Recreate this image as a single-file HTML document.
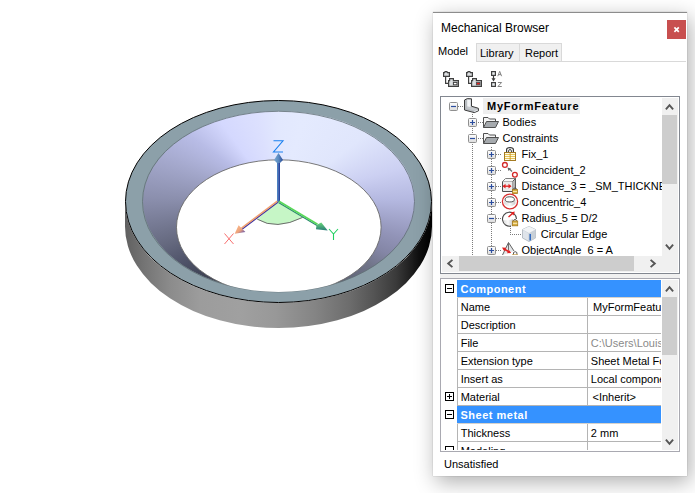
<!DOCTYPE html>
<html><head><meta charset="utf-8">
<style>
html,body{margin:0;padding:0;}
body{width:695px;height:493px;overflow:hidden;background:#fff;position:relative;font-family:"Liberation Sans",sans-serif;font-size:12px;color:#000;}
.a{position:absolute;}
.t{position:absolute;white-space:pre;line-height:16px;font-size:12px;}
#panel{position:absolute;left:433px;top:12px;width:254px;height:464px;background:#fff;box-shadow:0 0 1px rgba(0,0,0,0.3),3px 6px 20px rgba(0,0,0,0.32);}
#ptop{position:absolute;left:433px;top:12px;width:254px;height:1px;background:#8c8c8c;}
</style></head><body>
<!-- MODEL -->
<svg class="a" style="left:0;top:0" width="433" height="493" viewBox="0 0 433 493">
<defs>
<linearGradient id="gw" x1="125" y1="0" x2="432" y2="0" gradientUnits="userSpaceOnUse">
<stop offset="0" stop-color="#606060"/><stop offset="0.062" stop-color="#747474"/><stop offset="0.15" stop-color="#8c8c8c"/><stop offset="0.244" stop-color="#9c9c9c"/><stop offset="0.375" stop-color="#a0a0a0"/><stop offset="0.49" stop-color="#989898"/><stop offset="0.62" stop-color="#848484"/><stop offset="0.733" stop-color="#6c6c6c"/><stop offset="0.81" stop-color="#545454"/><stop offset="0.883" stop-color="#3a3a3a"/><stop offset="0.96" stop-color="#0e0e0e"/><stop offset="1" stop-color="#000"/>
</linearGradient>
</defs>
<path d="M125,201.5 A153.5,101.5 0 0 0 432,201.5 L432,226.5 A153.5,101.5 0 0 1 125,226.5 Z" fill="url(#gw)"/>
<ellipse cx="278.5" cy="201.5" rx="153" ry="101" fill="#8ca0a9" stroke="#000" stroke-width="1"/>
</svg>
<div class="a" style="left:142.5px;top:111.3px;width:272px;height:272px;border-radius:50%;transform-origin:0 0;transform:scaleY(0.664);background:conic-gradient(from 0deg at 50% 50%,#e2e8fe 0deg,#e4eafe 11deg,#e0e6fc 41deg,#ccd0f2 68deg,#b4b8e0 89deg,#9294b8 114deg,#8486a6 126deg,#707488 137deg,#404458 180deg,#404456 214deg,#50546a 227deg,#666a80 241deg,#8a8eac 271deg,#a4a8cc 298deg,#b8bce6 318deg,#d4d8fe 334deg,#dce0fe 350deg,#e2e8fe 360deg)"></div>
<svg class="a" style="left:0;top:0" width="433" height="493" viewBox="0 0 433 493">
<defs><clipPath id="ci"><ellipse cx="278.5" cy="201.6" rx="136" ry="90.3"/></clipPath></defs>
<ellipse cx="278.5" cy="201.6" rx="136" ry="90.3" fill="none" stroke="#5f6f74" stroke-width="0.8"/>
<g clip-path="url(#ci)"><ellipse cx="278.8" cy="227.2" rx="102.3" ry="67.4" fill="#fff" stroke="#6a6a6a" stroke-width="0.9"/></g>
<!-- sector -->
<path d="M278,201.5 L257.3,219.2 Q276,230.6 302.7,217.4 Z" fill="#c6f6c6"/>
<path d="M257.3,219.2 Q276,230.6 302.7,217.4" fill="none" stroke="#6c6c6c" stroke-width="1"/>
<defs>
<linearGradient id="gzh" x1="0" y1="0" x2="1" y2="0"><stop offset="0" stop-color="#7aa8d0"/><stop offset="0.5" stop-color="#5a8ac0"/><stop offset="1" stop-color="#2a4a98"/></linearGradient>
<linearGradient id="gxh" x1="0" y1="0" x2="1" y2="1"><stop offset="0" stop-color="#fcc090"/><stop offset="0.55" stop-color="#eea27a"/><stop offset="0.8" stop-color="#8a6aa0"/><stop offset="1" stop-color="#4a3a9a"/></linearGradient>
<linearGradient id="gyh" x1="0" y1="0" x2="0" y2="1"><stop offset="0" stop-color="#68d878"/><stop offset="1" stop-color="#2a7a78"/></linearGradient>
</defs>
<!-- Z -->
<rect x="277" y="161" width="1.2" height="41" fill="#4a80c0"/>
<rect x="278.2" y="161" width="1.8" height="41" fill="#2848a0"/>
<path d="M278.5,153 L283,160 L280,163 L277,163 L274,160 Z" fill="url(#gzh)"/>
<path d="M273.5,140.8 L283,140.8 L273.5,152 L283,152" fill="none" stroke="#1a80f0" stroke-width="1.1"/>
<!-- X -->
<line x1="277.8" y1="202.2" x2="242" y2="229.2" stroke="#3a30a0" stroke-width="1.3"/>
<line x1="277.3" y1="201.2" x2="241.5" y2="228.2" stroke="#f0a070" stroke-width="1.5"/>
<path d="M234.7,233.8 L238.6,225.3 L245.4,232 Z" fill="url(#gxh)"/>
<path d="M224.5,233.5 L233.5,244 M233.5,233.5 L224.5,244" stroke="#f87070" stroke-width="1"/>
<!-- Y -->
<line x1="278.5" y1="202.5" x2="317" y2="225.5" stroke="#2a8a70" stroke-width="1.3"/>
<line x1="279" y1="201.3" x2="317.5" y2="224.3" stroke="#58d858" stroke-width="1.6"/>
<path d="M327.7,230.6 L316,229.2 L316.5,225 L321.3,222.4 Z" fill="url(#gyh)"/>
<path d="M329,229 L333.5,234 L338,229 M333.5,234 L333.5,240" fill="none" stroke="#20d060" stroke-width="1.1"/>
</svg>

<div id="panel"></div>
<div id="ptop"></div>
<div class="t" style="left:441px;top:20px;color:#000">Mechanical Browser</div>
<svg class="a" style="left:667px;top:20px" width="19" height="19"><rect x="0" y="0" width="19" height="19" fill="#c84f4f"/><path d="M7.4 7.4L11.8 11.8M11.8 7.4L7.4 11.8" stroke="#fff" stroke-width="1.7"/></svg>

<!-- tabs -->
<div class="t" style="left:438px;top:43px;color:#000;font-size:11px">Model</div>
<div class="a" style="left:476px;top:43px;width:86px;height:18px;background:#f0f0f0;border:1px solid #d9d9d9;border-bottom:none;box-sizing:border-box"></div>
<div class="a" style="left:519px;top:43px;width:1px;height:18px;background:#d9d9d9"></div>
<div class="a" style="left:476px;top:61px;width:210px;height:1px;background:#d9d9d9"></div>
<div class="t" style="left:480px;top:45px;color:#000;font-size:11px">Library</div>
<div class="t" style="left:525px;top:45px;color:#000;font-size:11px">Report</div>

<!-- toolbar -->
<svg class="a" style="left:0;top:0" width="695" height="100">
<g id="tbi" stroke="#404040" stroke-width="1.2" fill="#dcdfe1" stroke-linejoin="miter">
<path d="M443.6,76.4 V72.6 H444.6 L445.1,71.6 H446.9 L447.4,72.6 H449.4 V76.4 Z"/>
<path d="M445.6,76.6 V83.4 H448.6" fill="none"/>
<path d="M448.6,86.4 V80.6 H449.6 V78.6 H453.4 V80.6 H458.4 V86.4 Z"/>
</g>
<rect x="453.4" y="82.4" width="3.6" height="2.4" fill="#fff" stroke="#404040" stroke-width="1"/>
<use href="#tbi" x="23"/>
<rect x="476.4" y="82.4" width="3.6" height="2.4" fill="#e81818" stroke="#505050" stroke-width="0.9"/>
<rect x="491.6" y="71.6" width="3.8" height="3.8" fill="#e8ecee" stroke="#404040" stroke-width="1.2"/>
<rect x="491.6" y="82.6" width="3.8" height="3.8" fill="#e8ecee" stroke="#404040" stroke-width="1.2"/>
<path d="M493.5,76 V79" stroke="#404040" stroke-width="1.2"/>
<path d="M491.5,78.2 H495.5 L493.5,81.6 Z" fill="#404040"/>
<path d="M497.8,76.2 L499.7,71.3 L501.6,76.2 M498.5,74.6 H500.9" fill="none" stroke="#777" stroke-width="0.9"/>
<path d="M497.9,82.5 H501.6 L497.9,86.5 H501.8" fill="none" stroke="#777" stroke-width="0.9"/>
</svg>
<!-- tree -->
<div class="a" style="left:440px;top:96px;width:240px;height:178px;border:1px solid #828790;box-sizing:border-box;background:#fff"></div>
<div class="a" style="left:440px;top:274px;width:240px;height:4px;background:#f0f0f0"></div>
<!-- TREE -->
<div class="a" style="left:442px;top:98px;width:220px;height:157px;overflow:hidden"><div class="a" style="left:41px;top:0;width:97px;height:16px;background:#efefef"></div>
<svg class="a" style="left:0;top:0" width="219" height="157">
<defs><linearGradient id="ge" x1="0" y1="0" x2="0" y2="1"><stop offset="0" stop-color="#fff"/><stop offset="1" stop-color="#dcdcdc"/></linearGradient></defs>
<path d="M16,8h1v1h-1zM18,8h1v1h-1zM20,8h1v1h-1zM30,16h1v1h-1zM30,18h1v1h-1zM30,20h1v1h-1zM30,22h1v1h-1zM30,24h1v1h-1zM30,26h1v1h-1zM30,28h1v1h-1zM30,30h1v1h-1zM30,32h1v1h-1zM30,34h1v1h-1zM30,36h1v1h-1zM30,38h1v1h-1zM30,40h1v1h-1zM30,42h1v1h-1zM30,44h1v1h-1zM30,46h1v1h-1zM30,48h1v1h-1zM30,50h1v1h-1zM30,52h1v1h-1zM30,54h1v1h-1zM30,56h1v1h-1zM30,58h1v1h-1zM30,60h1v1h-1zM30,62h1v1h-1zM30,64h1v1h-1zM30,66h1v1h-1zM30,68h1v1h-1zM30,70h1v1h-1zM30,72h1v1h-1zM30,74h1v1h-1zM30,76h1v1h-1zM30,78h1v1h-1zM30,80h1v1h-1zM30,82h1v1h-1zM30,84h1v1h-1zM30,86h1v1h-1zM30,88h1v1h-1zM30,90h1v1h-1zM30,92h1v1h-1zM30,94h1v1h-1zM30,96h1v1h-1zM30,98h1v1h-1zM30,100h1v1h-1zM30,102h1v1h-1zM30,104h1v1h-1zM30,106h1v1h-1zM30,108h1v1h-1zM30,110h1v1h-1zM30,112h1v1h-1zM30,114h1v1h-1zM30,116h1v1h-1zM30,118h1v1h-1zM30,120h1v1h-1zM30,122h1v1h-1zM30,124h1v1h-1zM30,126h1v1h-1zM30,128h1v1h-1zM30,130h1v1h-1zM30,132h1v1h-1zM30,134h1v1h-1zM30,136h1v1h-1zM30,138h1v1h-1zM30,140h1v1h-1zM30,142h1v1h-1zM30,144h1v1h-1zM30,146h1v1h-1zM30,148h1v1h-1zM30,150h1v1h-1zM30,152h1v1h-1zM30,154h1v1h-1zM30,156h1v1h-1zM36,24h1v1h-1zM38,24h1v1h-1zM40,24h1v1h-1zM36,40h1v1h-1zM38,40h1v1h-1zM40,40h1v1h-1zM49,49h1v1h-1zM49,51h1v1h-1zM49,53h1v1h-1zM49,55h1v1h-1zM49,57h1v1h-1zM49,59h1v1h-1zM49,61h1v1h-1zM49,63h1v1h-1zM49,65h1v1h-1zM49,67h1v1h-1zM49,69h1v1h-1zM49,71h1v1h-1zM49,73h1v1h-1zM49,75h1v1h-1zM49,77h1v1h-1zM49,79h1v1h-1zM49,81h1v1h-1zM49,83h1v1h-1zM49,85h1v1h-1zM49,87h1v1h-1zM49,89h1v1h-1zM49,91h1v1h-1zM49,93h1v1h-1zM49,95h1v1h-1zM49,97h1v1h-1zM49,99h1v1h-1zM49,101h1v1h-1zM49,103h1v1h-1zM49,105h1v1h-1zM49,107h1v1h-1zM49,109h1v1h-1zM49,111h1v1h-1zM49,113h1v1h-1zM49,115h1v1h-1zM49,117h1v1h-1zM49,119h1v1h-1zM49,121h1v1h-1zM49,123h1v1h-1zM49,125h1v1h-1zM49,127h1v1h-1zM49,129h1v1h-1zM49,131h1v1h-1zM49,133h1v1h-1zM49,135h1v1h-1zM49,137h1v1h-1zM49,139h1v1h-1zM49,141h1v1h-1zM49,143h1v1h-1zM49,145h1v1h-1zM49,147h1v1h-1zM49,149h1v1h-1zM49,151h1v1h-1zM49,153h1v1h-1zM49,155h1v1h-1zM54,56h1v1h-1zM56,56h1v1h-1zM58,56h1v1h-1zM54,72h1v1h-1zM56,72h1v1h-1zM58,72h1v1h-1zM54,88h1v1h-1zM56,88h1v1h-1zM58,88h1v1h-1zM54,104h1v1h-1zM56,104h1v1h-1zM58,104h1v1h-1zM54,120h1v1h-1zM56,120h1v1h-1zM58,120h1v1h-1zM54,152h1v1h-1zM56,152h1v1h-1zM58,152h1v1h-1zM68,128h1v1h-1zM68,130h1v1h-1zM68,132h1v1h-1zM68,134h1v1h-1zM68,136h1v1h-1zM70,136h1v1h-1zM72,136h1v1h-1zM74,136h1v1h-1zM76,136h1v1h-1zM78,136h1v1h-1z" fill="#7c7c7c"/>
<rect x="7.5" y="4.5" width="8" height="8" rx="1" fill="url(#ge)" stroke="#8f8f8f"/><path d="M9,8.5h5" stroke="#2b4d9e" stroke-width="1.2"/>
<rect x="26.5" y="20.5" width="8" height="8" rx="1" fill="url(#ge)" stroke="#8f8f8f"/><path d="M28,24.5h5M30.5,22v5" stroke="#2b4d9e" stroke-width="1.2"/>
<rect x="26.5" y="36.5" width="8" height="8" rx="1" fill="url(#ge)" stroke="#8f8f8f"/><path d="M28,40.5h5" stroke="#2b4d9e" stroke-width="1.2"/>
<rect x="45.5" y="52.5" width="8" height="8" rx="1" fill="url(#ge)" stroke="#8f8f8f"/><path d="M47,56.5h5M49.5,54v5" stroke="#2b4d9e" stroke-width="1.2"/>
<rect x="45.5" y="68.5" width="8" height="8" rx="1" fill="url(#ge)" stroke="#8f8f8f"/><path d="M47,72.5h5M49.5,70v5" stroke="#2b4d9e" stroke-width="1.2"/>
<rect x="45.5" y="84.5" width="8" height="8" rx="1" fill="url(#ge)" stroke="#8f8f8f"/><path d="M47,88.5h5M49.5,86v5" stroke="#2b4d9e" stroke-width="1.2"/>
<rect x="45.5" y="100.5" width="8" height="8" rx="1" fill="url(#ge)" stroke="#8f8f8f"/><path d="M47,104.5h5M49.5,102v5" stroke="#2b4d9e" stroke-width="1.2"/>
<rect x="45.5" y="116.5" width="8" height="8" rx="1" fill="url(#ge)" stroke="#8f8f8f"/><path d="M47,120.5h5" stroke="#2b4d9e" stroke-width="1.2"/>
<rect x="45.5" y="148.5" width="8" height="8" rx="1" fill="url(#ge)" stroke="#8f8f8f"/><path d="M47,152.5h5M49.5,150v5" stroke="#2b4d9e" stroke-width="1.2"/>
</svg>
<div class="t" style="left:45px;top:0px;color:#000;font-weight:bold;font-size:11px;letter-spacing:0.75px">MyFormFeature</div>
<div class="t" style="left:60.5px;top:16px;color:#000;font-size:11px">Bodies</div>
<div class="t" style="left:60.5px;top:32px;color:#000;font-size:11px">Constraints</div>
<div class="t" style="left:79.5px;top:48px;color:#000;font-size:11px">Fix_1</div>
<div class="t" style="left:79.5px;top:64px;color:#000;font-size:11px">Coincident_2</div>
<div class="t" style="left:79.5px;top:80px;color:#000;font-size:11px">Distance_3 = _SM_THICKNESS</div>
<div class="t" style="left:79.5px;top:96px;color:#000;font-size:11px">Concentric_4</div>
<div class="t" style="left:79.5px;top:112px;color:#000;font-size:11px">Radius_5 = D/2</div>
<div class="t" style="left:98.7px;top:128px;color:#000;font-size:11px">Circular Edge</div>
<div class="t" style="left:79.5px;top:144px;color:#000;font-size:11px">ObjectAngle_6 = A</div>
<svg class="a" style="left:0;top:0" width="219" height="157"><g transform="translate(-442,-98)">
<defs>
<linearGradient id="gold" x1="0" y1="0" x2="0" y2="1"><stop offset="0" stop-color="#f2d98a"/><stop offset="1" stop-color="#b8892c"/></linearGradient>
<linearGradient id="gray1" x1="0" y1="0" x2="1" y2="1"><stop offset="0" stop-color="#f4f6f8"/><stop offset="1" stop-color="#b4b8bc"/></linearGradient>
</defs>
<!-- root L -->
<path d="M464.5,100 L467.3,98.6 L471.5,98.8 L471.5,106.2 L478.4,108.3 L478.5,110.8 L474.2,112.6 L464.5,110 Z" fill="#b8bcc0" stroke="#3c3c3c" stroke-width="1"/>
<path d="M467.2,99.8 L470.6,99.8 L470.6,107 L467.2,106.5 Z" fill="#f2f4f6"/>
<path d="M467.2,107 L470.8,107.2 L477.6,109.2 L474,110.6 L467.2,108.6 Z" fill="#c8ccd0"/>
<path d="M474.2,111 L477.8,109.8 L477.8,110.6 L474.4,111.9 Z" fill="#eef0f2"/>
<!-- folders -->
<g id="fold">
<path d="M483.5,127.5 L483.5,117.5 L488,117.5 L489.5,119 L495.5,119 L495.5,121.5" fill="#f4f4f4" stroke="#505050"/>
<path d="M483.5,127.5 L486.5,121.5 L498.5,121.5 L495.5,127.5 Z" fill="#a6aaae" stroke="#505050"/>
</g>
<use href="#fold" y="16"/>
<!-- lock -->
<path d="M506.6,152 V149.6 Q506.6,147.6 510,147.6 Q513.4,147.6 513.4,149.6 V152" fill="none" stroke="#3a3a3a" stroke-width="1.2"/>
<path d="M508.6,152 V150.8 Q508.6,149.6 510,149.6 Q511.4,149.6 511.4,150.8 V152" fill="none" stroke="#3a3a3a" stroke-width="1"/>
<rect x="504.5" y="152.5" width="11" height="8" fill="#d8b040" stroke="#a47a22" stroke-width="1"/>
<rect x="505" y="153" width="10" height="7" fill="#e6c458"/>
<rect x="505" y="153" width="10" height="1" fill="#fffbe8"/><rect x="505" y="155" width="10" height="1" fill="#fffbe8"/><rect x="505" y="157" width="10" height="1" fill="#fffbe8"/><rect x="505" y="159" width="10" height="1" fill="#fffbe8"/>
<rect x="509.5" y="153" width="1.5" height="7" fill="#c89820" opacity="0.6"/>
<!-- coincident -->
<circle cx="504.9" cy="164.9" r="2.4" fill="#fff" stroke="#d42a2a" stroke-width="1.3"/>
<circle cx="514.9" cy="174.8" r="2.4" fill="#fff" stroke="#d42a2a" stroke-width="1.3"/>
<path d="M512,171.5 L509.5,169" stroke="#707070" stroke-width="1.2"/>
<path d="M507.5,167.5 L511,168.5 L508.5,171 Z" fill="#606060"/>
<!-- distance -->
<path d="M502.5,181.5 L505.5,178.5 L515.5,178.5 L512.5,181.5 Z" fill="#f8f8f8" stroke="#707070" stroke-width="0.9"/>
<path d="M512.5,181.5 L515.5,178.5 L515.5,188.5 L512.5,191.5 Z" fill="#b4b4b4" stroke="#505050" stroke-width="0.9"/>
<path d="M502.5,181.5 H512.5 V191.5 H502.5 Z" fill="#ececec"/>
<path d="M502.5,181.5 V191.5 H512.5" fill="none" stroke="#505050" stroke-width="1"/>
<path d="M503.5,186.2 L510.5,186.2" stroke="#e02020" stroke-width="1.3"/>
<path d="M502.5,186.2 L505.5,183.8 L505.5,188.6 Z M511.5,186.2 L508.5,183.8 L508.5,188.6 Z" fill="#e02020"/>
<path d="M513.6,189.5 V188.6 Q515,187.2 516.4,188.6 V189.5" fill="none" stroke="#444" stroke-width="0.9"/>
<rect x="512.5" y="189.5" width="5" height="4" fill="#d8b040" stroke="#a47a22" stroke-width="0.8"/>
<rect x="513" y="191" width="4" height="0.8" fill="#fff4d0"/>
<!-- concentric -->
<defs><linearGradient id="gcy" x1="0" y1="0" x2="1" y2="0"><stop offset="0" stop-color="#d8d8d8"/><stop offset="0.5" stop-color="#fafafa"/><stop offset="1" stop-color="#c8c8c8"/></linearGradient></defs>
<path d="M504.2,199.5 V204 Q509.8,208.5 515.4,204 V199.5 Z" fill="url(#gcy)"/>
<ellipse cx="509.8" cy="199.4" rx="4.6" ry="2.6" fill="#fff" stroke="#505050" stroke-width="1"/>
<ellipse cx="510" cy="201.5" rx="7.6" ry="7.3" fill="none" stroke="#d83030" stroke-width="1.3"/>
<!-- radius -->
<path d="M503,220 Q503.5,225.5 510,226 Q513,226 513,224 V219 Q509,221 503,220 Z" fill="url(#gcy)"/>
<path d="M511,226 A7,7 0 1 1 516.5,219" fill="none" stroke="#4a4a4a" stroke-width="1.1"/>
<path d="M508.5,217 L512.5,213.5" stroke="#e02020" stroke-width="1.4"/>
<path d="M514.8,211.5 L510.6,212.5 L513.6,215.4 Z" fill="#e02020"/>
<path d="M513.6,221 V220.2 Q515,218.6 516.4,220.2 V221" fill="none" stroke="#444" stroke-width="0.9"/>
<rect x="512.5" y="221" width="5.2" height="4.8" fill="#d8b040" stroke="#a47a22" stroke-width="0.8"/>
<rect x="513" y="222.8" width="4.2" height="0.9" fill="#fff4d0"/>
<!-- cube -->
<path d="M529,226.5 L535.5,229.5 L535.5,238 L529,241.5 L522.5,238 L522.5,229.5 Z" fill="#dfe4ea" stroke="#aab2ba" stroke-width="0.8"/>
<path d="M522.5,229.5 L529,233 L535.5,229.5 M529,233 L529,241.5" fill="none" stroke="#c0c8d0" stroke-width="0.8"/>
<path d="M529,233 L535.5,229.5 L535.5,238 L529,241.5 Z" fill="#c8d0d8"/>
<path d="M522.5,229.5 L529,226.5 L535.5,229.5 L529,233 Z" fill="#f2f4f6"/>
<path d="M530.2,234 L530.2,240.5" stroke="#2060c0" stroke-width="1.4"/>
<!-- object angle -->
<path d="M502.5,255 L508.5,242.5 L514,251" fill="#e4e6e8" stroke="#505050" stroke-width="0.9"/>
<path d="M508.5,243 V250" stroke="#606060" stroke-width="0.9"/>
<path d="M504,249 L509.5,252" stroke="#e02020" stroke-width="1.5"/>
<path d="M502,247.5 L506.2,247.8 L504.2,251.2 Z M511.2,253 L507,253.3 L508.8,249.8 Z" fill="#e02020"/>
<path d="M513.5,254.5 V252.5 Q515.2,250.8 516.9,252.5 V254.5" fill="none" stroke="#444" stroke-width="0.9"/>
<path d="M512,255 L518,255" stroke="#c09030" stroke-width="1.2"/>
</g></svg>
</div>
<!-- /TREE -->
<!-- grid -->
<div class="a" style="left:440px;top:278px;width:240px;height:174px;border:1px solid #a9a9b1;box-sizing:border-box;background:#fff"></div>

<!-- GRIDC -->
<div class="a" style="left:442px;top:280px;width:219px;height:170px;overflow:hidden">
<div class="a" style="left:15px;top:0px;width:1px;height:200px;background:#b4b4b4"></div>
<div class="a" style="left:15px;top:0px;width:204px;height:17px;background:#3592ff"></div>
<div class="a" style="left:15px;top:17px;width:204px;height:1px;background:#d6d2cc"></div>
<div class="t" style="left:18.5px;top:0px;line-height:18px;font-size:11px;font-weight:bold;letter-spacing:0.5px;color:#fff">Component</div>
<div class="a" style="left:16px;top:35px;width:203px;height:1px;background:#b4b4b4"></div>
<div class="a" style="left:145px;top:18px;width:1px;height:17px;background:#b4b4b4"></div>
<div class="t" style="left:18.7px;top:18px;line-height:18px;font-size:11px;color:#000">Name</div>
<div class="t" style="left:151px;top:18px;line-height:18px;font-size:11px;color:#000">MyFormFeature</div>
<div class="a" style="left:16px;top:53px;width:203px;height:1px;background:#b4b4b4"></div>
<div class="a" style="left:145px;top:36px;width:1px;height:17px;background:#b4b4b4"></div>
<div class="t" style="left:18.7px;top:36px;line-height:18px;font-size:11px;color:#000">Description</div>
<div class="t" style="left:148.8px;top:36px;line-height:18px;font-size:11px;color:#000"></div>
<div class="a" style="left:16px;top:71px;width:203px;height:1px;background:#b4b4b4"></div>
<div class="a" style="left:145px;top:54px;width:1px;height:17px;background:#b4b4b4"></div>
<div class="t" style="left:18.7px;top:54px;line-height:18px;font-size:11px;color:#000">File</div>
<div class="t" style="left:148.8px;top:54px;line-height:18px;font-size:11px;color:#8a8a8a">C:\Users\Louis\Documents</div>
<div class="a" style="left:16px;top:89px;width:203px;height:1px;background:#b4b4b4"></div>
<div class="a" style="left:145px;top:72px;width:1px;height:17px;background:#b4b4b4"></div>
<div class="t" style="left:18.7px;top:72px;line-height:18px;font-size:11px;color:#000">Extension type</div>
<div class="t" style="left:148.8px;top:72px;line-height:18px;font-size:11px;color:#000">Sheet Metal Form Feature</div>
<div class="a" style="left:16px;top:107px;width:203px;height:1px;background:#b4b4b4"></div>
<div class="a" style="left:145px;top:90px;width:1px;height:17px;background:#b4b4b4"></div>
<div class="t" style="left:18.7px;top:90px;line-height:18px;font-size:11px;color:#000">Insert as</div>
<div class="t" style="left:148.8px;top:90px;line-height:18px;font-size:11px;color:#000">Local component</div>
<div class="a" style="left:16px;top:125px;width:203px;height:1px;background:#b4b4b4"></div>
<div class="a" style="left:145px;top:108px;width:1px;height:17px;background:#b4b4b4"></div>
<div class="t" style="left:18.7px;top:108px;line-height:18px;font-size:11px;color:#000">Material</div>
<div class="t" style="left:150.5px;top:108px;line-height:18px;font-size:11px;color:#000">&lt;Inherit&gt;</div>
<div class="a" style="left:15px;top:126px;width:204px;height:17px;background:#3592ff"></div>
<div class="a" style="left:15px;top:143px;width:204px;height:1px;background:#d6d2cc"></div>
<div class="t" style="left:18.5px;top:126px;line-height:18px;font-size:11px;font-weight:bold;letter-spacing:0.5px;color:#fff">Sheet metal</div>
<div class="a" style="left:16px;top:161px;width:203px;height:1px;background:#b4b4b4"></div>
<div class="a" style="left:145px;top:144px;width:1px;height:17px;background:#b4b4b4"></div>
<div class="t" style="left:18.7px;top:144px;line-height:18px;font-size:11px;color:#000">Thickness</div>
<div class="t" style="left:148.8px;top:144px;line-height:18px;font-size:11px;color:#000">2 mm</div>
<div class="a" style="left:16px;top:179px;width:203px;height:1px;background:#b4b4b4"></div>
<div class="a" style="left:145px;top:162px;width:1px;height:17px;background:#b4b4b4"></div>
<div class="t" style="left:18.7px;top:162px;line-height:18px;font-size:11px;color:#000">Modeling</div>
<svg class="a" style="left:0;top:0" width="219" height="170"><rect x="3.5" y="4.5" width="8" height="8" fill="none" stroke="#000"/><path d="M5,8.5h5" stroke="#000" stroke-width="1"/><rect x="3.5" y="112.5" width="8" height="8" fill="none" stroke="#000"/><path d="M5,116.5h5M7.5,114v5" stroke="#000" stroke-width="1"/><rect x="3.5" y="130.5" width="8" height="8" fill="none" stroke="#000"/><path d="M5,134.5h5" stroke="#000" stroke-width="1"/><rect x="3.5" y="166.5" width="8" height="8" fill="none" stroke="#000"/></svg>
</div>
<div class="a" style="left:662px;top:98px;width:16px;height:174px;background:#f0f0f0"></div>
<div class="a" style="left:442px;top:256px;width:220px;height:16px;background:#f0f0f0"></div>
<div class="a" style="left:662px;top:115px;width:15px;height:69px;background:#cdcdcd"></div>
<div class="a" style="left:459px;top:256px;width:175px;height:15px;background:#cdcdcd"></div>
<div class="a" style="left:662px;top:280px;width:16px;height:170px;background:#f0f0f0"></div>
<div class="a" style="left:662px;top:297px;width:15px;height:58px;background:#cdcdcd"></div>
<svg class="a" style="left:0;top:0" width="695" height="493"><path d="M665.9,109.4 L669.5,105.2 L673.1,109.4" fill="none" stroke="#555" stroke-width="1.9"/><path d="M665.9,244.6 L669.5,248.8 L673.1,244.6" fill="none" stroke="#555" stroke-width="1.9"/><path d="M452.4,259.9 L448.2,263.5 L452.4,267.1" fill="none" stroke="#555" stroke-width="1.9"/><path d="M650.6,259.9 L654.8,263.5 L650.6,267.1" fill="none" stroke="#555" stroke-width="1.9"/><path d="M665.9,291.4 L669.5,287.2 L673.1,291.4" fill="none" stroke="#555" stroke-width="1.9"/><path d="M665.9,439.6 L669.5,443.8 L673.1,439.6" fill="none" stroke="#555" stroke-width="1.9"/></svg>
<!-- /GRIDC -->
<div class="t" style="left:444px;top:456px;color:#000;font-size:11px">Unsatisfied</div>
</body></html>
